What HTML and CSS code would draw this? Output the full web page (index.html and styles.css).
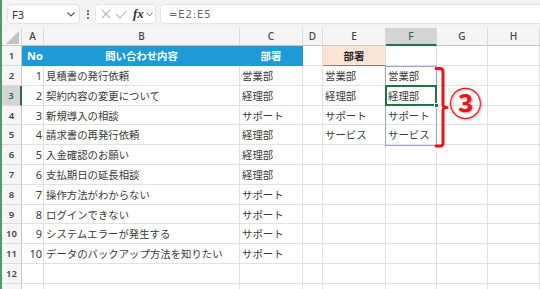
FILE: index.html
```html
<!DOCTYPE html>
<html lang="ja">
<head>
<meta charset="utf-8">
<link rel="stylesheet" href="styles.css">
</head>
<body>
<div class="app">
  <div class="edge"></div>
  <div class="main">
    <div class="toolbar">
      <div class="namebox">
        <span class="nb-text">F3</span>
        <svg class="chev" width="8" height="5" viewBox="0 0 8 5"><path d="M0.5 0.5 L4 4 L7.5 0.5" fill="none" stroke="#555" stroke-width="1.1"/></svg>
      </div>
      <div class="vdots"><i></i><i></i><i></i></div>
      <div class="fxbox">
        <svg width="10" height="10" viewBox="0 0 10 10"><path d="M1 1 L9 9 M9 1 L1 9" stroke="#b8b8b8" stroke-width="1.1"/></svg>
        <svg width="11" height="9" viewBox="0 0 11 9"><path d="M0.5 4.5 L4 8 L10.5 0.8" fill="none" stroke="#b8b8b8" stroke-width="1.1"/></svg>
        <span class="fx">fx</span>
        <svg width="7" height="5" viewBox="0 0 7 5"><path d="M0.5 0.5 L3.5 4 L6.5 0.5" fill="none" stroke="#777" stroke-width="1"/></svg>
      </div>
      <div class="formula">=E2:E5</div>
    </div>

    <div class="sheet">
      <div class="row colhdr">
        <div class="c corner"><div class="tri"></div></div>
        <div class="c">A</div><div class="c">B</div><div class="c">C</div><div class="c">D</div>
        <div class="c">E</div><div class="c sel-col">F</div><div class="c">G</div><div class="c">H</div>
      </div>
      <div class="row r1">
        <div class="c rh">1</div>
        <div class="c blue no">No</div><div class="c blue ctr">問い合わせ内容</div><div class="c blue ctr">部署</div>
        <div class="c"></div><div class="c peach ctr">部署</div><div class="c"></div><div class="c"></div><div class="c"></div>
      </div>
      <div class="row">
        <div class="c rh">2</div><div class="c num">1</div><div class="c">見積書の発行依頼</div><div class="c">営業部</div>
        <div class="c"></div><div class="c">営業部</div><div class="c">営業部</div><div class="c"></div><div class="c"></div>
      </div>
      <div class="row">
        <div class="c rh sel-row">3</div><div class="c num">2</div><div class="c">契約内容の変更について</div><div class="c">経理部</div>
        <div class="c"></div><div class="c">経理部</div><div class="c">経理部</div><div class="c"></div><div class="c"></div>
      </div>
      <div class="row">
        <div class="c rh">4</div><div class="c num">3</div><div class="c">新規導入の相談</div><div class="c">サポート</div>
        <div class="c"></div><div class="c">サポート</div><div class="c">サポート</div><div class="c"></div><div class="c"></div>
      </div>
      <div class="row">
        <div class="c rh">5</div><div class="c num">4</div><div class="c">請求書の再発行依頼</div><div class="c">経理部</div>
        <div class="c"></div><div class="c">サービス</div><div class="c">サービス</div><div class="c"></div><div class="c"></div>
      </div>
      <div class="row">
        <div class="c rh">6</div><div class="c num">5</div><div class="c">入金確認のお願い</div><div class="c">経理部</div>
        <div class="c"></div><div class="c"></div><div class="c"></div><div class="c"></div><div class="c"></div>
      </div>
      <div class="row">
        <div class="c rh">7</div><div class="c num">6</div><div class="c">支払期日の延長相談</div><div class="c">経理部</div>
        <div class="c"></div><div class="c"></div><div class="c"></div><div class="c"></div><div class="c"></div>
      </div>
      <div class="row">
        <div class="c rh">8</div><div class="c num">7</div><div class="c">操作方法がわからない</div><div class="c">サポート</div>
        <div class="c"></div><div class="c"></div><div class="c"></div><div class="c"></div><div class="c"></div>
      </div>
      <div class="row">
        <div class="c rh">9</div><div class="c num">8</div><div class="c">ログインできない</div><div class="c">サポート</div>
        <div class="c"></div><div class="c"></div><div class="c"></div><div class="c"></div><div class="c"></div>
      </div>
      <div class="row">
        <div class="c rh">10</div><div class="c num">9</div><div class="c">システムエラーが発生する</div><div class="c">サポート</div>
        <div class="c"></div><div class="c"></div><div class="c"></div><div class="c"></div><div class="c"></div>
      </div>
      <div class="row">
        <div class="c rh">11</div><div class="c num">10</div><div class="c">データのバックアップ方法を知りたい</div><div class="c">サポート</div>
        <div class="c"></div><div class="c"></div><div class="c"></div><div class="c"></div><div class="c"></div>
      </div>
      <div class="row">
        <div class="c rh">12</div><div class="c"></div><div class="c"></div><div class="c"></div>
        <div class="c"></div><div class="c"></div><div class="c"></div><div class="c"></div><div class="c"></div>
      </div>
      <div class="row">
        <div class="c rh"></div><div class="c"></div><div class="c"></div><div class="c"></div>
        <div class="c"></div><div class="c"></div><div class="c"></div><div class="c"></div><div class="c"></div>
      </div>
    </div>
  </div>
</div>

<div class="spill"></div>
<div class="active"><div class="handle"></div></div>
<svg class="bracket" width="20" height="84" viewBox="432 66 20 84">
  <path d="M436 68.5 H440 Q443 68.5 443 71.5 V105 Q443 107.5 447 107.5 Q443 107.5 443 110 V143 Q443 146 440 146 H436" fill="none" stroke="#e8141c" stroke-width="3" stroke-linejoin="round" stroke-linecap="round"/>
</svg>
<div class="marker">③</div>
</body>
</html>
```

FILE: styles.css
```css
* { box-sizing: border-box; }
html, body { margin: 0; padding: 0; }
body {
  width: 540px;
  height: 289px;
  overflow: hidden;
  position: relative;
  background: #fff;
  font-family: "Noto Sans CJK JP", "Noto Sans", sans-serif;
  color: #333;
}
.app { display: flex; height: 289px; overflow: hidden; }
.edge { width: 2px; background: #4f9a6a; flex: none; }
.main { flex: 1; display: flex; flex-direction: column; min-width: 0; overflow: hidden; }

.toolbar {
  height: 28px;
  flex: none;
  background: #f3f3f3;
  display: flex;
  align-items: center;
  padding: 0 0 0 5px;
}
.namebox {
  width: 73px; height: 20px;
  background: #fff;
  border: 1px solid #e2e2e2;
  border-radius: 4px;
  display: flex; align-items: center; justify-content: space-between;
  padding: 0 4px 0 4px;
}
.nb-text { font-size: 11px; color: #333; font-family: "Noto Sans", sans-serif; }
.chev { margin-top: 1px; }
.vdots {
  width: 15px; height: 20px;
  display: flex; flex-direction: column; align-items: center; justify-content: center; gap: 1.5px;
}
.vdots i { width: 2px; height: 2px; background: #444; border-radius: 1px; display: block; }
.fxbox {
  width: 61px; height: 20px;
  background: #fff;
  border: 1px solid #e6e6e6;
  border-radius: 4px;
  display: flex; align-items: center; gap: 5px;
  padding: 0 0 0 5px;
}
.fx {
  font-family: "Liberation Serif", serif;
  font-style: italic; font-weight: bold;
  font-size: 13px; color: #333; margin-left: 1px; margin-right: -3px;
}
.formula {
  flex: 1; height: 20px; margin-left: 4px;
  background: #fff;
  border: 1px solid #e6e6e6; border-right: none;
  border-radius: 4px 0 0 4px;
  font-size: 10px; letter-spacing: 0.9px; color: #666;
  font-family: "DejaVu Sans", sans-serif;
  display: flex; align-items: center; padding-left: 8px;
}

.sheet { flex: 1; display: flex; flex-direction: column; }
.row {
  display: grid;
  grid-template-columns: 20px 22px 196px 63px 20px 63px 51px 51px 52px;
  height: 19.8px;
  flex: none;
}
.row.colhdr { height: 18px; }
.row.r1 { height: 20px; }
.c {
  border-right: 1px solid #e1e1e1;
  border-bottom: 1px solid #e1e1e1;
  font-size: 10.4px;
  line-height: 19px;
  padding: 0 2px;
  white-space: nowrap;
  overflow: hidden;
  color: #3a3a3a;
}
.colhdr .c {
  background: #f5f5f5;
  border-right: 1px solid #d9d9d9;
  border-bottom: 1px solid #c6c6c6;
  text-align: center;
  font-size: 10px;
  line-height: 17px;
  font-weight: 500;
  color: #444;
  font-family: "Noto Sans", sans-serif;
}
.colhdr .corner {
  display: flex; align-items: flex-end; justify-content: flex-end;
  padding: 0 2px 1px 0;
}
.tri {
  width: 13px; height: 13px;
  background: #c2c2c2;
  clip-path: polygon(100% 0, 100% 100%, 0 100%);
}
.colhdr .sel-col {
  background: #d4d4d4;
  border-bottom: 2px solid #217346;
  color: #217346;
}
.rh {
  background: #f5f5f5;
  border-right: 1px solid #c6c6c6;
  border-bottom: 1px solid #dcdcdc;
  text-align: center;
  font-size: 9.5px;
  font-weight: 600;
  padding: 0;
  color: #444;
  font-family: "Noto Sans", sans-serif;
}
.rh.sel-row {
  background: #d4d4d4;
  border-right: 2px solid #217346;
  color: #217346;
}
.blue {
  background: #1e9ad6;
  border-right-color: #1e9ad6;
  border-bottom-color: #1e9ad6;
  color: #fff;
  font-weight: bold;
}
.blue.no { padding-left: 5px; font-family: "Noto Sans", sans-serif; font-size: 11px; }
.ctr { text-align: center; }
.peach {
  background: #fbe3d5;
  font-weight: bold;
  color: #222;
  border-bottom: 1px solid #8b7b72;
}
.num { text-align: right; padding-right: 1px; font-family: "Noto Sans", sans-serif; font-size: 11px; }

.spill {
  position: absolute;
  left: 385px; top: 66px;
  width: 52px; height: 80px;
  border: 1px solid #8ea6d9;
}
.active {
  position: absolute;
  left: 385px; top: 85px;
  width: 52px; height: 21px;
  border: 2px solid #217346;
}
.handle {
  position: absolute;
  right: -4px; bottom: -4px;
  width: 5px; height: 5px;
  background: #217346;
  border: 1px solid #fff;
}
.bracket { position: absolute; left: 432px; top: 66px; }
.marker {
  position: absolute;
  left: 449px; top: 81px;
  font-size: 33px;
  line-height: 42px;
  font-weight: bold;
  color: #e8141c;
  font-family: "Noto Sans CJK JP", sans-serif;
  text-shadow: 0 0 1px #fff, 1px 1px 2px rgba(0,0,0,0.35);
}
```
